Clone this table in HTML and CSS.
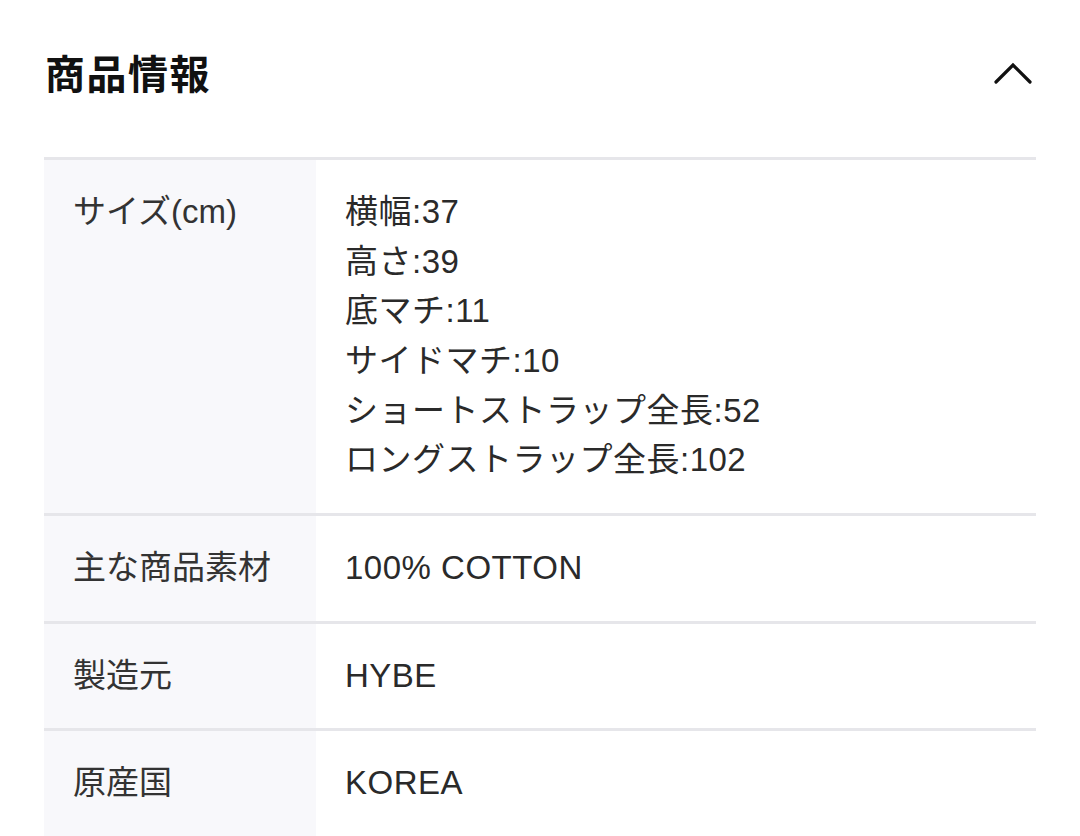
FILE: index.html
```html
<!DOCTYPE html>
<html lang="ja">
<head>
<meta charset="utf-8">
<link rel="stylesheet" href="styles.css">
</head>
<body>
<section class="panel">
  <header class="panel-head">
    <h2 class="panel-title">商品情報</h2>
    <svg class="chevron" width="38" height="24" viewBox="0 0 38 24" aria-hidden="true">
      <polyline points="2,22 19,5 36,22" fill="none" stroke="#111" stroke-width="3.2" stroke-linecap="round" stroke-linejoin="miter"/>
    </svg>
  </header>
  <div class="spec">
    <div class="row">
      <div class="label">サイズ(cm)</div>
      <div class="value">横幅:37<br>高さ:39<br>底マチ:11<br>サイドマチ:10<br>ショートストラップ全長:52<br>ロングストラップ全長:102</div>
    </div>
    <div class="row">
      <div class="label">主な商品素材</div>
      <div class="value">100% COTTON</div>
    </div>
    <div class="row">
      <div class="label">製造元</div>
      <div class="value">HYBE</div>
    </div>
    <div class="row">
      <div class="label">原産国</div>
      <div class="value">KOREA</div>
    </div>
  </div>
</section>
</body>
</html>
```

FILE: styles.css
```css
html, body {
  margin: 0;
  padding: 0;
  background: #ffffff;
}
body {
  font-family: "Liberation Sans", "Noto Sans CJK JP", sans-serif;
  color: #333333;
}
.panel {
  width: 992px;
  margin-left: 44px;
}
.panel-head {
  height: 144px;
  display: flex;
  align-items: center;
  justify-content: space-between;
  margin-bottom: 13px;
}
.panel-title {
  margin: 0 0 0 1px;
  font-family: "Noto Sans CJK JP", sans-serif;
  font-size: 40px;
  font-weight: 700;
  color: #111111;
  letter-spacing: 1.5px;
}
.chevron {
  display: block;
  margin-right: 4px;
}
.spec {
  display: flex;
  flex-direction: column;
}
.row {
  display: grid;
  grid-template-columns: 272px 1fr;
  border-top: 3px solid #e6e6ea;
}
.label {
  background: #f8f8fb;
  padding: 27px 29px 28px 29px;
  font-size: 33px;
  line-height: 49.67px;
  color: #333333;
}
.value {
  padding: 27px 29px 28px 29px;
  font-size: 33px;
  line-height: 49.67px;
  letter-spacing: 0.5px;
  color: #2a2a2a;
}
```
